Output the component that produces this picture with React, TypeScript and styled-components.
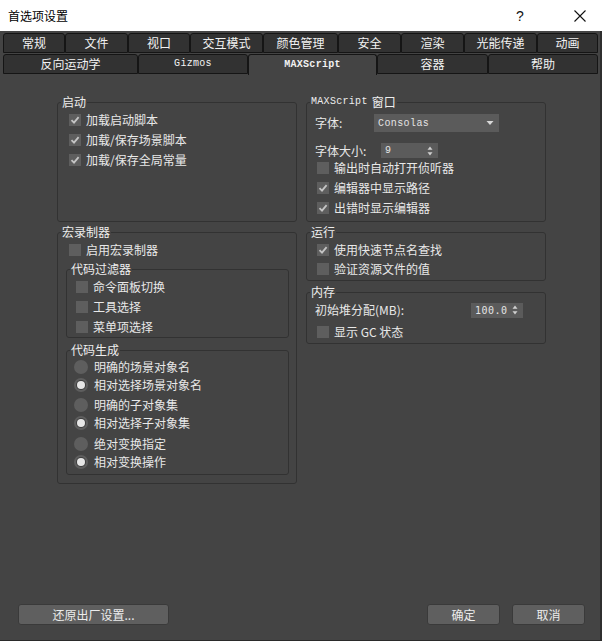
import React from "react";
import styled, { createGlobalStyle } from "styled-components";

const GlobalStyle = createGlobalStyle`
  html, body {
    margin: 0;
    padding: 0;
    background: #444444;
  }
  body {
    font-family: "Noto Sans CJK SC", "Noto Sans", sans-serif;
    font-size: 12px;
    color: #e8e8e8;
  }
  * {
    box-sizing: border-box;
  }
`;

const mono = `"Liberation Mono", "DejaVu Sans Mono", "Noto Sans CJK SC", monospace`;

const WindowFrame = styled.div`
  width: 602px;
  height: 641px;
  display: flex;
  flex-direction: column;
  background: #444444;
  border-right: 2px solid #2f2f2f;
  border-bottom: 1px solid #2a2a2a;
`;

const TitleBar = styled.div`
  height: 31px;
  flex: 0 0 31px;
  background: #ffffff;
  display: flex;
  align-items: center;
  padding-left: 8px;
  margin-right: -2px;
  color: #000;
`;

const TitleText = styled.div`
  flex: 1;
  font-size: 12px;
  line-height: 14px;
`;

const TitleButton = styled.div<{ $w: number }>`
  width: ${(p) => p.$w}px;
  height: 31px;
  display: flex;
  align-items: center;
  justify-content: center;
  font-family: "Liberation Sans", sans-serif;
  font-size: 14px;
  color: #111;
`;

const TabStrip = styled.div`
  padding: 2px 2px 0 3px;
  display: flex;
  flex-direction: column;
  gap: 1px;
`;

const TabRow = styled.div`
  display: flex;
  height: 20px;
  align-items: flex-end;
`;

const Tab = styled.div<{ $w: number; $active?: boolean; $mono?: boolean }>`
  width: ${(p) => p.$w}px;
  height: ${(p) => (p.$active ? 21 : 20)}px;
  margin-bottom: ${(p) => (p.$active ? -1 : 0)}px;
  background: ${(p) => (p.$active ? "#444444" : "#323232")};
  border: 1px solid #151515;
  border-bottom: ${(p) => (p.$active ? "none" : "1px solid #151515")};
  border-radius: 3px 3px 0 0;
  display: flex;
  align-items: center;
  justify-content: center;
  color: #f2f2f2;
  font-family: ${(p) => (p.$mono ? mono : "inherit")};
  font-size: ${(p) => (p.$mono ? "10px" : "12px")};
  font-weight: ${(p) => (p.$active ? 700 : 400)};
  line-height: 14px;
  letter-spacing: ${(p) => (p.$mono ? "0.3px" : "0")};
`;

const Body = styled.div`
  display: flex;
  align-items: flex-start;
  gap: 9px;
  padding: 21px 0 0 57px;
`;

const Column = styled.div<{ $gap: number }>`
  width: 240px;
  display: flex;
  flex-direction: column;
  gap: ${(p) => p.$gap}px;
`;

const Group = styled.fieldset<{ $pb?: number; $m?: string }>`
  margin: ${(p) => p.$m ?? "0"};
  padding: 0 0 ${(p) => p.$pb ?? 0}px 0;
  border: 1px solid #323232;
  border-radius: 3px;
  min-width: 0;
`;

const Legend = styled.legend`
  padding: 0 1px;
  margin-left: 3px;
  height: 14px;
  display: flex;
  align-items: center;
  gap: 4px;
  font-size: 12px;
  line-height: 14px;
  color: #eeeeee;
`;

const MonoText = styled.span`
  font-family: ${mono};
  font-size: 10px;
  line-height: 14px;
  letter-spacing: 0.3px;
`;

const GroupBody = styled.div<{ $h: number }>`
  height: ${(p) => p.$h}px;
  padding-top: 1px;
`;

const Row = styled.div<{ $h: number; $indent: number; $mt?: number; $pr?: number }>`
  display: flex;
  align-items: center;
  height: ${(p) => p.$h}px;
  padding-left: ${(p) => p.$indent}px;
  padding-right: ${(p) => p.$pr ?? 0}px;
  margin-top: ${(p) => p.$mt ?? 0}px;
  gap: 5px;
  white-space: nowrap;
`;

const FieldRow = styled(Row)`
  gap: 0;
`;

const Label = styled.span<{ $w?: number }>`
  width: ${(p) => (p.$w ? `${p.$w}px` : "auto")};
  flex: none;
  line-height: 14px;
`;

const BoxMark = styled.span`
  width: 12px;
  height: 12px;
  flex: none;
  background: #5e5e5e;
  display: flex;
  align-items: center;
  justify-content: center;
`;

const RadioMark = styled.span<{ $on: boolean }>`
  width: 14px;
  height: 14px;
  flex: none;
  border-radius: 50%;
  background: #5e5e5e;
  display: flex;
  align-items: center;
  justify-content: center;
  margin-right: 1px;

  &::after {
    content: "";
    display: ${(p) => (p.$on ? "block" : "none")};
    width: 8px;
    height: 8px;
    border-radius: 50%;
    background: #e6e6e6;
    box-shadow: 0 0 0 1px #3e3e3e;
  }
`;

const Field = styled.div<{ $w: number; $h: number }>`
  width: ${(p) => p.$w}px;
  height: ${(p) => p.$h}px;
  background: #5b5b5b;
  display: flex;
  align-items: center;
  justify-content: space-between;
  padding: 0 5px 0 4px;
  flex: none;
`;

const FieldText = styled.span<{ $sans?: boolean }>`
  font-family: ${(p) => (p.$sans ? `"DejaVu Sans Mono", monospace` : mono)};
  font-size: 10px;
  color: #e4e4e4;
  letter-spacing: ${(p) => (p.$sans ? "0.5px" : "0.4px")};
`;

const Spacer = styled.span`
  flex: 1;
`;

const Footer = styled.div`
  margin-top: auto;
  display: flex;
  gap: 12px;
  padding: 0 15px 15px 18px;
`;

const Button = styled.div<{ $w: number }>`
  width: ${(p) => p.$w}px;
  height: 21px;
  border: 1px solid #3a3a3a;
  border-radius: 3px;
  background: #5f5f5f;
  display: flex;
  align-items: center;
  justify-content: center;
  color: #ececec;
  font-size: 12px;
`;

const Check = ({ on, label, indent, h = 20, mt }: { on: boolean; label: string; indent: number; h?: number; mt?: number }) => (
  <Row $h={h} $indent={indent} $mt={mt}>
    <BoxMark>
      {on && (
        <svg width="10" height="10" viewBox="0 0 10 10">
          <path d="M1.5 5.2 L4 7.6 L8.6 2.2" fill="none" stroke="#c4c4c4" strokeWidth="1.8" />
        </svg>
      )}
    </BoxMark>
    <Label>{label}</Label>
  </Row>
);

const Radio = ({ on, label, mt }: { on: boolean; label: string; mt?: number }) => (
  <Row $h={18} $indent={7} $mt={mt}>
    <RadioMark $on={on} />
    <Label>{label}</Label>
  </Row>
);

const SpinArrows = () => (
  <svg width="6" height="10" viewBox="0 0 6 10">
    <path d="M3 0.5 L5.5 3.8 L0.5 3.8 Z" fill="#d0d0d0" />
    <path d="M3 9.5 L5.5 6.2 L0.5 6.2 Z" fill="#d0d0d0" />
  </svg>
);

const rowOne = [
  { t: "常规", w: 62 },
  { t: "文件", w: 63 },
  { t: "视口", w: 62 },
  { t: "交互模式", w: 73 },
  { t: "颜色管理", w: 75 },
  { t: "安全", w: 63 },
  { t: "渲染", w: 63 },
  { t: "光能传递", w: 73 },
  { t: "动画", w: 61 },
];

const rowTwo = [
  { t: "反向运动学", w: 135 },
  { t: "Gizmos", w: 110, mono: true },
  { t: "MAXScript", w: 129, mono: true, active: true },
  { t: "容器", w: 111 },
  { t: "帮助", w: 110 },
];

export default function App() {
  return (
    <>
      <GlobalStyle />
      <WindowFrame>
        <TitleBar>
          <TitleText>首选项设置</TitleText>
          <TitleButton $w={24}>?</TitleButton>
          <TitleButton $w={36} />
          <TitleButton $w={24}>
            <svg width="12" height="12" viewBox="0 0 12 12">
              <path d="M0.5 0.5 L11.5 11.5 M11.5 0.5 L0.5 11.5" stroke="#111" strokeWidth="1.1" />
            </svg>
          </TitleButton>
          <TitleButton $w={10} />
        </TitleBar>

        <TabStrip>
          <TabRow>
            {rowOne.map((t) => (
              <Tab key={t.t} $w={t.w}>
                {t.t}
              </Tab>
            ))}
          </TabRow>
          <TabRow>
            {rowTwo.map((t) => (
              <Tab key={t.t} $w={t.w} $mono={t.mono} $active={t.active}>
                {t.t}
              </Tab>
            ))}
          </TabRow>
        </TabStrip>

        <Body>
          <Column $gap={3}>
            <Group>
              <Legend>启动</Legend>
              <GroupBody $h={112}>
                <Check on label="加载启动脚本" indent={11} />
                <Check on label="加载/保存场景脚本" indent={11} />
                <Check on label="加载/保存全局常量" indent={11} />
              </GroupBody>
            </Group>

            <Group $pb={8}>
              <Legend>宏录制器</Legend>
              <Check on={false} label="启用宏录制器" indent={11} mt={1} />
              <Group $m="2px 7px 0 8px">
                <Legend>代码过滤器</Legend>
                <Check on={false} label="命令面板切换" indent={9} mt={1} />
                <Check on={false} label="工具选择" indent={9} />
                <Check on={false} label="菜单项选择" indent={9} />
              </Group>
              <Group $m="5px 7px 0 8px" $pb={3}>
                <Legend>代码生成</Legend>
                <Radio on={false} label="明确的场景对象名" mt={1} />
                <Radio on label="相对选择场景对象名" />
                <Radio on={false} label="明确的子对象集" mt={2} />
                <Radio on label="相对选择子对象集" />
                <Radio on={false} label="绝对变换指定" mt={3} />
                <Radio on label="相对变换操作" />
              </Group>
            </Group>
          </Column>

          <Column $gap={3}>
            <Group $pb={3}>
              <Legend>
                <MonoText>MAXScript</MonoText>
                <span>窗口</span>
              </Legend>
              <FieldRow $h={18} $indent={8} $mt={5}>
                <Label $w={59}>字体:</Label>
                <Field $w={125} $h={18}>
                  <FieldText>Consolas</FieldText>
                  <svg width="8" height="6" viewBox="0 0 8 6">
                    <path d="M0.5 1 L7.5 1 L4 5 Z" fill="#d8d8d8" />
                  </svg>
                </Field>
              </FieldRow>
              <FieldRow $h={15} $indent={8} $mt={11}>
                <Label $w={66}>字体大小:</Label>
                <Field $w={57} $h={15}>
                  <FieldText>9</FieldText>
                  <SpinArrows />
                </Field>
              </FieldRow>
              <Check on={false} label="输出时自动打开侦听器" indent={10} />
              <Check on label="编辑器中显示路径" indent={10} />
              <Check on label="出错时显示编辑器" indent={10} />
            </Group>

            <Group $pb={2}>
              <Legend>运行</Legend>
              <Check on label="使用快速节点名查找" indent={10} h={19} mt={1} />
              <Check on={false} label="验证资源文件的值" indent={10} h={19} />
            </Group>

            <Group $pb={1} $m="1px 0 0 0">
              <Legend>内存</Legend>
              <Row $h={20} $indent={8} $mt={1} $pr={22}>
                <Label>初始堆分配(MB):</Label>
                <Spacer />
                <Field $w={52} $h={15}>
                  <FieldText $sans>100.0</FieldText>
                  <SpinArrows />
                </Field>
              </Row>
              <Check on={false} label="显示 GC 状态" indent={10} mt={2} />
            </Group>
          </Column>
        </Body>

        <Footer>
          <Button $w={151}>还原出厂设置...</Button>
          <Spacer />
          <Button $w={73}>确定</Button>
          <Button $w={73}>取消</Button>
        </Footer>
      </WindowFrame>
    </>
  );
}
